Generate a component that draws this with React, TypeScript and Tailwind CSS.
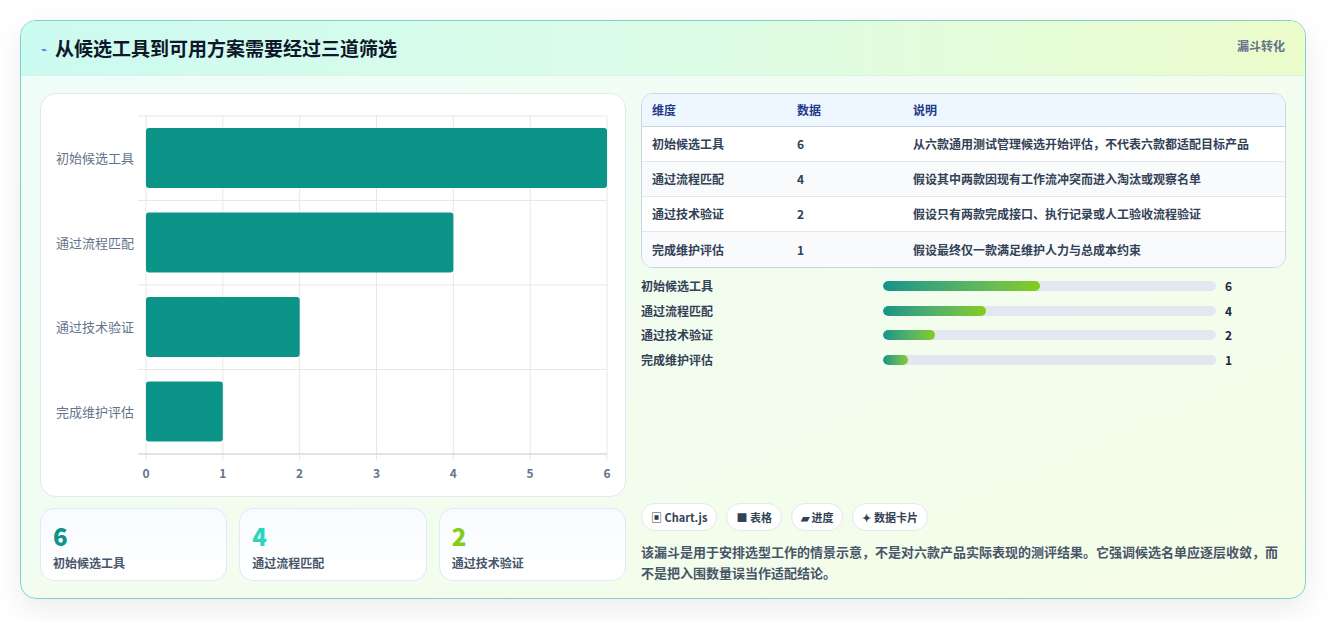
const font = { fontFamily: '"Noto Sans CJK SC", "Noto Sans", sans-serif' };

const rows = [
  { name: '初始候选工具', value: 6, note: '从六款通用测试管理候选开始评估，不代表六款都适配目标产品', pct: 47 },
  { name: '通过流程匹配', value: 4, note: '假设其中两款因现有工作流冲突而进入淘汰或观察名单', pct: 31 },
  { name: '通过技术验证', value: 2, note: '假设只有两款完成接口、执行记录或人工验收流程验证', pct: 15.6 },
  { name: '完成维护评估', value: 1, note: '假设最终仅一款满足维护人力与总成本约束', pct: 7.5 },
];

function Chart() {
  const x0 = 105, w = 461, y0 = 22, band = 84.5;
  const sx = (v: number) => x0 + (v / 6) * w;
  return (
    <svg width="585" height="403" viewBox="0 0 585 403" style={font}>
      {[0, 1, 2, 3, 4, 5, 6].map(i => (
        <line key={i} x1={sx(i)} x2={sx(i)} y1={y0} y2={y0 + 4 * band + 6} stroke="#e5e7eb" strokeWidth="1" />
      ))}
      {[0, 1, 2, 3, 4].map(i => (
        <line key={i} x1={x0 - 8} x2={x0 + w} y1={y0 + i * band} y2={y0 + i * band} stroke="#e5e7eb" strokeWidth="1" />
      ))}
      <line x1={x0 - 8} x2={x0 + w} y1={y0 + 4 * band - 22 + 22} y2={y0 + 4 * band} stroke="#cbd5e1" />
      {rows.map((r, i) => (
        <g key={r.name}>
          <rect x={x0} y={y0 + i * band + 12} width={sx(r.value) - x0} height={60} rx="3" fill="#0d9488" />
          <text x={x0 - 12} y={y0 + i * band + 47} textAnchor="end" fontSize="13" fill="#64748b">{r.name}</text>
        </g>
      ))}
      {[0, 1, 2, 3, 4, 5, 6].map(i => (
        <text key={i} x={sx(i)} y={384} textAnchor="middle" fontSize="12" fontWeight="700" fill="#64748b">{i}</text>
      ))}
    </svg>
  );
}

export default function App() {
  return (
    <div className="w-[1327px] h-[621px] bg-white pt-[20px] pl-[20px]" style={font}>
      <div className="w-[1286px] h-[579px] rounded-[16px] border border-[#7dd3c8] overflow-hidden shadow-[0_10px_30px_rgba(0,0,0,0.08)] bg-gradient-to-br from-[#effdfa] to-[#f5fde6] flex flex-col">
        <div className="h-[55px] shrink-0 flex items-center justify-between px-[20px] bg-gradient-to-r from-[#ccfbf1] via-[#dcfce7] to-[#ecfccb] border-b border-[#d9f2ea]">
          <div className="flex items-center gap-[8px]">
            <span className="text-[10px] text-[#2563eb]">⌁</span>
            <span className="text-[19px] font-bold text-[#0f172a]">从候选工具到可用方案需要经过三道筛选</span>
          </div>
          <span className="text-[12px] font-bold text-[#64748b] self-start mt-[16px]">漏斗转化</span>
        </div>
        <div className="flex gap-[15px] px-[19px] pt-[17px]">
          <div className="w-[586px] flex flex-col gap-[11px]">
            <div className="h-[404px] bg-white rounded-[16px] border border-[#e2e8f0]">
              <Chart />
            </div>
            <div className="grid grid-cols-3 gap-[12px]">
              {[
                ['6', 'text-[#0d9488]', '初始候选工具'],
                ['4', 'text-[#2dd4bf]', '通过流程匹配'],
                ['2', 'text-[#84cc16]', '通过技术验证'],
              ].map(([v, c, l]) => (
                <div key={l} className="h-[73px] rounded-[14px] border border-[#dbeafe] bg-gradient-to-b from-[#f8fbff] to-white px-[12px] pt-[13px]">
                  <div className={`text-[24px] leading-[28px] font-extrabold ${c}`}>{v}</div>
                  <div className="text-[12px] font-semibold text-[#475569] mt-[4px]">{l}</div>
                </div>
              ))}
            </div>
          </div>
          <div className="flex-1 flex flex-col">
            <div className="rounded-[12px] border border-[#cbd5e1] overflow-hidden bg-white">
              <div className="h-[33px] flex items-center bg-[#eef6ff] border-b border-[#cbd5e1] text-[12px] font-bold text-[#1e3a8a]">
                <div className="w-[155px] pl-[10px]">维度</div>
                <div className="w-[116px]">数据</div>
                <div>说明</div>
              </div>
              {rows.map((r, i) => (
                <div key={r.name} className={`h-[35px] flex items-center text-[12px] font-semibold text-[#334155] ${i < 3 ? 'border-b border-[#e2e8f0]' : ''} ${i % 2 ? 'bg-[#f8fafc]' : 'bg-white'}`}>
                  <div className="w-[155px] pl-[10px]">{r.name}</div>
                  <div className="w-[116px]">{r.value}</div>
                  <div>{r.note}</div>
                </div>
              ))}
            </div>
            <div className="flex flex-col gap-[8px] mt-[10px]">
              {rows.map(r => (
                <div key={r.name} className="h-[16.5px] flex items-center text-[12px] font-semibold text-[#334155]">
                  <div className="w-[242px]">{r.name}</div>
                  <div className="w-[333px] h-[10px] rounded-full bg-[#e2e8f0] overflow-hidden">
                    <div className="h-full rounded-full bg-gradient-to-r from-[#0d9488] to-[#84cc16]" style={{ width: `${r.pct}%` }} />
                  </div>
                  <div className="ml-[9px] font-bold text-[#1e293b]">{r.value}</div>
                </div>
              ))}
            </div>
            <div className="flex gap-[9px] mt-[135px]">
              {['▣ Chart.js', '■ 表格', '▰ 进度', '✦ 数据卡片'].map(t => (
                <span key={t} className="h-[28px] px-[9px] flex items-center rounded-full border border-[#e2e8f0] bg-white text-[11px] font-bold text-[#334155]">{t}</span>
              ))}
            </div>
            <p className="mt-[10px] text-[13px] leading-[21px] font-semibold text-[#475569]">
              该漏斗是用于安排选型工作的情景示意，不是对六款产品实际表现的测评结果。它强调候选名单应逐层收敛，而不是把入围数量误当作适配结论。
            </p>
          </div>
        </div>
      </div>
    </div>
  );
}
